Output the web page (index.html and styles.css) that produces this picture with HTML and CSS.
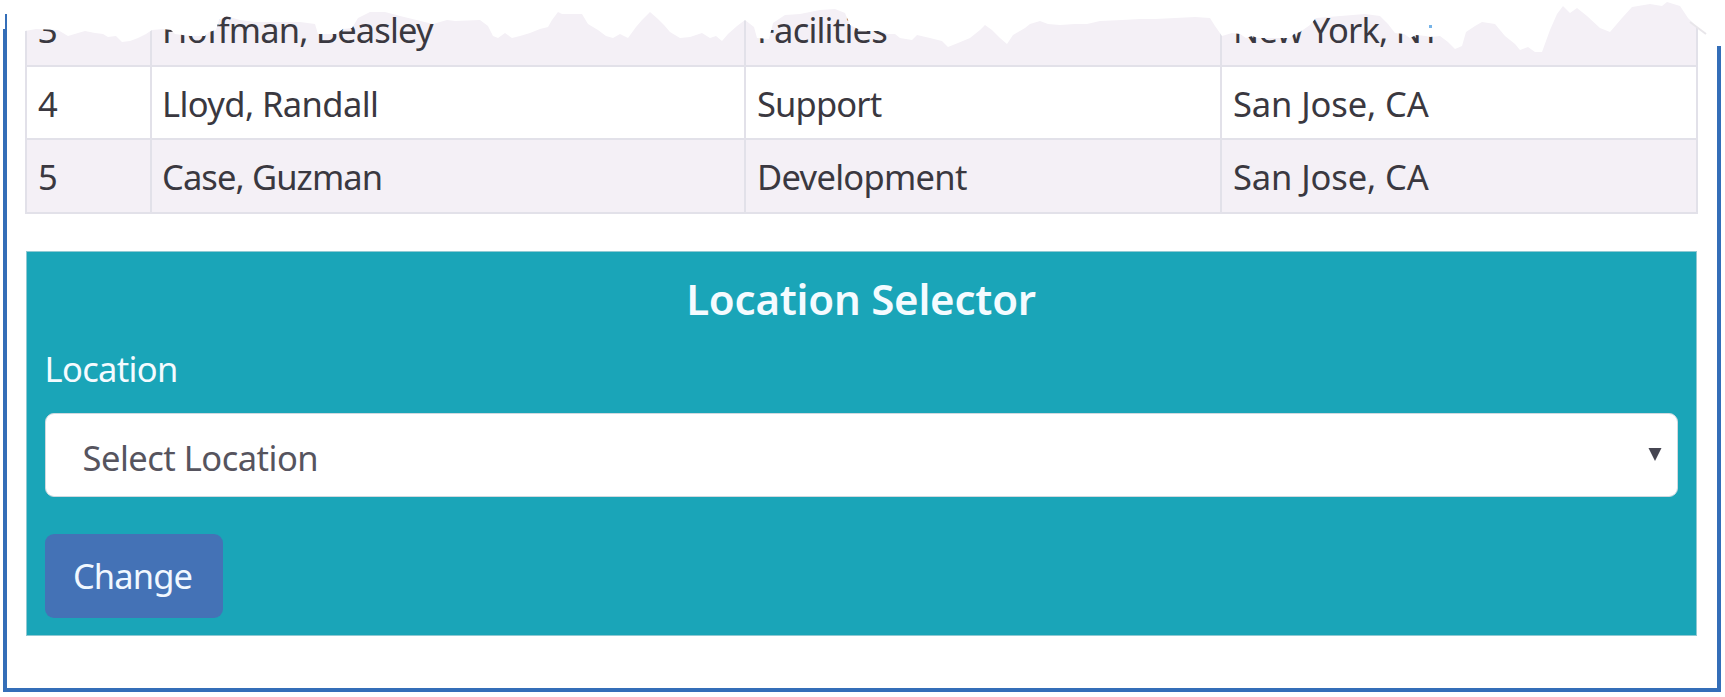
FILE: index.html
```
<!DOCTYPE html>
<html lang="en">
<head>
<meta charset="utf-8">
<title>Location Selector</title>
<link rel="stylesheet" href="styles.css">
</head>
<body>
<main class="frame">
  <table class="people">
    <colgroup><col class="col-id"><col class="col-name"><col class="col-dept"><col class="col-city"></colgroup>
    <tbody>
      <tr class="shaded"><td>3</td><td><span class="t-hoffman">Hoffman, Beasley</span></td><td><span class="t-facilities">Facilities</span></td><td><span class="t-york">New York, NY</span></td></tr>
      <tr><td>4</td><td><span class="t-lloyd">Lloyd, Randall</span></td><td><span class="t-support">Support</span></td><td><span class="t-jose">San Jose, CA</span></td></tr>
      <tr class="shaded"><td>5</td><td><span class="t-case">Case, Guzman</span></td><td><span class="t-dev">Development</span></td><td><span class="t-jose">San Jose, CA</span></td></tr>
    </tbody>
  </table>
  <section class="panel">
    <h2 class="title">Location Selector</h2>
    <div class="label">Location</div>
    <div class="select"><span>Select Location</span>
      <svg class="arrow" width="14" height="13" viewBox="0 0 14 13"><path d="M0.5 0H13.5L7 13Z" fill="#464652"/></svg>
    </div>
    <button class="change" type="button">Change</button>
  </section>
</main>
<!-- torn paper edge -->
<svg class="torn" width="1725" height="66" viewBox="0 0 1725 66">
  <path fill="#fff" d="M0 0V29H5V14H8V30L25 31 36 29 58 30 68 36 78 33 85 31 95 33 103 34 108 37 116 36 122 42 130 41 138 38 146 34 152 30 163 29 171 30 175 34 190 36 205 36 209 32 216 30 219 20 226 16 240 20 255 22 300 22 315 24 318 34 336 34 343 29 352 28 358 18 370 12 385 12 400 16 433 24 440 22 447 20 455 21 480 20 488 26 493 36 498 38 505 33 512 38 520 36 530 33 540 29 548 27 552 20 558 12 562 14 582 14 588 24 598 30 606 36 613 38 620 34 628 38 636 27 642 20 650 12 658 19 664 25 670 32 680 38 690 37 702 33 710 38 716 36 722 41 728 34 737 26 745 20 754 27 757 38 769 39 773 23 785 15 800 14 820 10 835 9 845 13 850 25 862 31 880 31 888 34 895 34 900 38 912 40 917 35 930 38 942 41 948 47 958 43 970 38 980 30 985 25 992 30 1000 38 1007 44 1013 35 1025 28 1030 24 1040 21 1048 24 1060 25 1075 24 1087 24 1100 21 1122 20 1140 19 1155 19 1195 17 1210 18 1215 26 1222 36 1232 33 1240 34 1246 38 1252 36 1258 38 1275 38 1290 38 1294 34 1300 32 1310 25 1316 18 1365 14 1380 16 1388 24 1395 33 1404 34 1410 38 1416 35 1426 36 1430 37 1440 36 1448 42 1455 49 1462 46 1466 32 1475 26 1482 22 1495 24 1505 36 1515 44 1520 50 1528 47 1535 52 1542 52 1550 30 1557 14 1563 6 1570 13 1577 8 1587 16 1600 28 1610 32 1622 18 1632 7 1650 4 1662 6 1667 2 1680 6 1688 18 1697 27 1706 34 1713 46H1725V0Z"/>
  <path d="M1690 22L1706 34" stroke="#e8e6ea" stroke-width="2"/>
  <path d="M1429 25h3v3h-3z" fill="#76b4e8"/>
</svg>
</body>
</html>
```
FILE: styles.css
```
* { box-sizing: border-box; }
body {
  margin: 0;
  height: 697px;
  overflow: hidden;
  position: relative;
  background: #fff;
  font-family: "Noto Sans", "Open Sans", sans-serif;
  font-size: 34.5px;
  color: #3a3840;
}
.frame {
  width: 1718px;
  height: 692px;
  margin-left: 3px;
  border: 4px solid #346eb8;
  border-top: 0;
  padding: 0 20px 0 18px;
  overflow: hidden;
}
.people {
  width: 1673px;
  margin-top: -9px;
  border-collapse: collapse;
  table-layout: fixed;
}
.col-id { width: 125px; }
.col-name { width: 594px; }
.col-dept { width: 476px; }
.people tr { height: 73.5px; }
.people td {
  border: 2px solid #e2e1e9;
  padding: 3px 0 0 11px;
  line-height: 50px;
  white-space: nowrap;
}
.people td:nth-child(2) { padding-left: 10px; }
.shaded { background: #f4f0f6; }
.panel {
  width: 1671px;
  height: 385px;
  margin: 37px 0 0 0.5px;
  padding: 19px 18px 0;
  background: #1aa5b8;
  border: 1px solid #8fc9d3;
  color: #f4fbff;
  display: flex;
  flex-direction: column;
  align-items: flex-start;
}
.title {
  align-self: center;
  margin: 0;
  font-size: 42px;
  font-weight: 600;
  line-height: 56px;
  letter-spacing: -0.22px;
}
.label {
  margin-top: 18px;
  line-height: 48px;
  letter-spacing: -0.65px;
}
.select {
  width: 1633px;
  height: 84px;
  margin-top: 20px;
  padding: 5px 15px 0 37px;
  display: flex;
  align-items: center;
  justify-content: space-between;
  background: #fff;
  border: 1px solid #cfd9df;
  border-radius: 9px;
  color: #56545e;
  letter-spacing: -0.5px;
}
.arrow { margin-top: -5px; }
.change {
  width: 178px;
  height: 84px;
  margin-top: 37px;
  padding: 0 2px 0 0;
  border: 0;
  border-radius: 9px;
  background: #4472b6;
  color: #f1f8ff;
  font: inherit;
  letter-spacing: -0.9px;
}
.torn {
  position: absolute;
  left: 0;
  top: 0;
}
.t-hoffman { letter-spacing: -0.85px; }
.t-facilities { letter-spacing: -0.8px; }
.t-york { letter-spacing: -0.8px; }
.t-lloyd { letter-spacing: -0.6px; }
.t-support { letter-spacing: -0.85px; }
.t-jose { letter-spacing: -0.1px; }
.t-case { letter-spacing: -0.9px; }
.t-dev { letter-spacing: -0.7px; }
```
